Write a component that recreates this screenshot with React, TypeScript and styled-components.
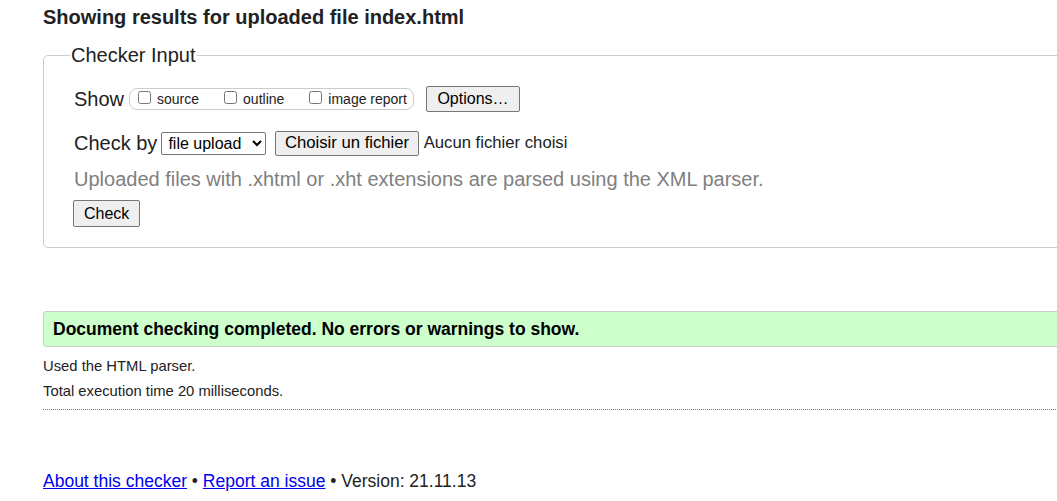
import React from "react";
import styled, { createGlobalStyle } from "styled-components";

const Global = createGlobalStyle`
  html, body { margin: 0; padding: 0; background: #fff; overflow: hidden; }
  body { font-family: Arial, "Liberation Sans", sans-serif; color: #222; }
`;

const Page = styled.div`
  width: 1100px;
  padding: 0 0 0 43px;
  box-sizing: border-box;
`;

const Heading = styled.h2`
  margin: 0;
  padding-top: 6px;
  font-size: 20px;
  line-height: 23px;
  font-weight: bold;
  color: #222;
`;

const Field = styled.fieldset`
  margin: 15px 0 0 0;
  padding: 18px 30px 20px 30px;
  border: 1px solid #ccc;
  border-radius: 5px;
  display: flex;
  flex-direction: column;
`;

const Legend = styled.legend`
  font-size: 20px;
  line-height: 23px;
  padding: 0 1px;
  margin-left: -4px;
  color: #222;
`;

const Row = styled.div<{ $h: number; $mt?: number }>`
  display: flex;
  align-items: center;
  height: ${(p) => p.$h}px;
  margin-top: ${(p) => p.$mt ?? 0}px;
`;

const Label = styled.span`
  font-size: 20px;
  line-height: 23px;
  color: #222;
`;

const Group = styled.div`
  display: flex;
  align-items: center;
  height: 20px;
  margin-left: 5px;
  padding: 0 6px 0 8px;
  border: 1px solid #ccc;
  border-radius: 8px;
  gap: 25px;
`;

const Check = styled.label`
  display: flex;
  align-items: flex-end;
  font-size: 14px;
  line-height: 16px;
  color: #222;
  gap: 6px;
`;

const Box = styled.input`
  width: 13px;
  height: 13px;
  margin: 0 0 3px 0;
`;

const Btn = styled.button<{ $px: number; $h: number; $ml?: number; $fs?: number }>`
  font-family: Arial, "Liberation Sans", sans-serif;
  font-size: ${(p) => p.$fs ?? 16}px;
  color: #000;
  background: #efefef;
  border: 1px solid #767676;
  border-radius: 2px;
  height: ${(p) => p.$h}px;
  padding: 0 ${(p) => p.$px}px;
  margin-left: ${(p) => p.$ml ?? 0}px;
`;

const Select = styled.select`
  font-family: Arial, "Liberation Sans", sans-serif;
  font-size: 16px;
  color: #000;
  height: 23px;
  width: 105px;
  margin-left: 4px;
  border: 1px solid #767676;
  border-radius: 2px;
  background: #fff;
  padding: 0 0 0 2px;
`;

const NoFile = styled.span`
  font-size: 16.7px;
  margin-left: 5px;
  color: #222;
`;

const Hint = styled.p`
  margin: 10px 0 0 0;
  font-size: 20px;
  line-height: 24px;
  color: #808080;
`;

const Result = styled.div`
  margin-top: 63px;
  height: 34px;
  display: flex;
  align-items: center;
  padding-left: 9px;
  background: #ccffcc;
  border: 1px solid #ccc;
  border-radius: 3px;
  font-size: 17.5px;
  font-weight: bold;
  color: #000;
`;

const Note = styled.p<{ $mt: number }>`
  margin: ${(p) => p.$mt}px 0 0 0;
  font-size: 14.8px;
  line-height: 17px;
  color: #222;
`;

const Rule = styled.hr`
  margin: 9px 0 0 0;
  border: 0;
  border-top: 1px dotted #777;
  height: 0;
`;

const Footer = styled.p`
  margin: 61px 0 0 0;
  font-size: 17.5px;
  line-height: 20px;
  color: #222;
`;

const Link = styled.a`
  color: #0000ee;
  text-decoration: underline;
`;

export default function App() {
  return (
    <Page>
      <Global />
      <Heading>Showing results for uploaded file index.html</Heading>
      <Field>
        <Legend>Checker Input</Legend>
        <Row $h={28}>
          <Label>Show</Label>
          <Group>
            <Check>
              <Box type="checkbox" />
              source
            </Check>
            <Check>
              <Box type="checkbox" />
              outline
            </Check>
            <Check>
              <Box type="checkbox" />
              image report
            </Check>
          </Group>
          <Btn $px={10.5} $h={26} $ml={12}>Options…</Btn>
        </Row>
        <Row $h={28} $mt={16}>
          <Label>Check by</Label>
          <Select defaultValue="file">
            <option value="file">file upload</option>
          </Select>
          <Btn $px={8.5} $h={25} $ml={9} $fs={16.7}>Choisir un fichier</Btn>
          <NoFile>Aucun fichier choisi</NoFile>
        </Row>
        <Hint>Uploaded files with .xhtml or .xht extensions are parsed using the XML parser.</Hint>
        <Row $h={27} $mt={9}>
          <Btn $px={10} $h={27} $ml={-1}>Check</Btn>
        </Row>
      </Field>
      <Result>Document checking completed. No errors or warnings to show.</Result>
      <Note $mt={11}>Used the HTML parser.</Note>
      <Note $mt={8}>Total execution time 20 milliseconds.</Note>
      <Rule />
      <Footer>
        <Link href="#">About this checker</Link> • <Link href="#">Report an issue</Link> • Version: 21.11.13
      </Footer>
    </Page>
  );
}
